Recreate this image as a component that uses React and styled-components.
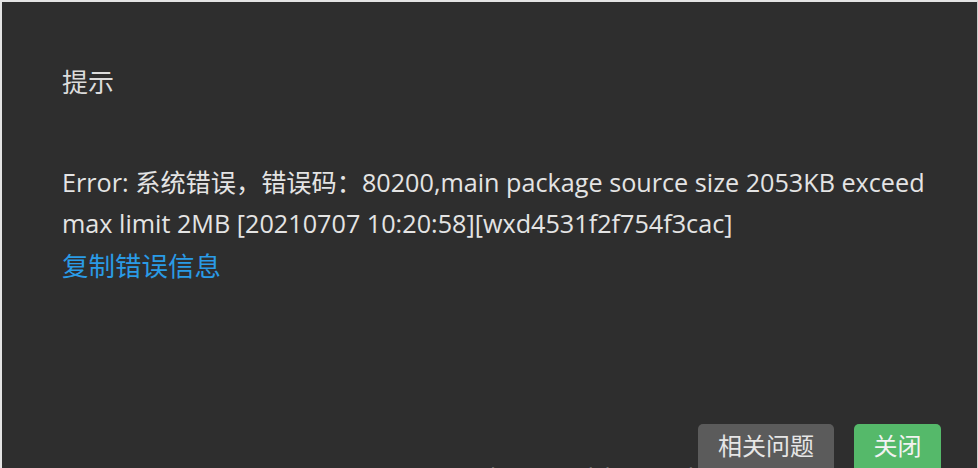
import React from 'react';
import styled, { createGlobalStyle } from 'styled-components';

const GlobalStyle = createGlobalStyle`
  html, body {
    margin: 0;
    padding: 0;
    background: #2e2e2e;
  }
  body {
    font-family: "Open Sans", "Noto Sans CJK SC", sans-serif;
  }
`;

function App() {
  return (
    <>
      <GlobalStyle />
      <Dialog>
        <Title>提示</Title>
        <Message>
          Error: 系统错误，错误码：80200,main package source size 2053KB exceed max limit 2MB [20210707 10:20:58][wxd4531f2f754f3cac]
        </Message>
        <CopyLink>复制错误信息</CopyLink>
        <Footer>
          <Button>相关问题</Button>
          <Button primary>关闭</Button>
        </Footer>
        <Watermark>https://blog.csdn.net/weixin_44389997</Watermark>
      </Dialog>
    </>
  );
}

export default App;

const Dialog = styled.div`
  position: relative;
  box-sizing: border-box;
  height: 100vh;
  overflow: hidden;
  display: flex;
  flex-direction: column;
  padding: 61px 36px 0 62px;
  background: #2e2e2e;
  border-top: 2px solid #e4e4e4;
  border-left: 2px solid #e4e4e4;
  border-right: 1px solid #cfcfcf;
`;

const Title = styled.div`
  font-size: 26px;
  line-height: 39px;
  color: #dcdcdc;
  margin-left: -2px;
`;

const Message = styled.div`
  margin-top: 60px;
  margin-left: -2px;
  font-size: 25.2px;
  line-height: 41px;
  color: #e4e4e4;
  max-width: 876px;
`;

const CopyLink = styled.a`
  margin-left: -2px;
  font-size: 26.5px;
  line-height: 44px;
  color: #2a9be6;
  cursor: pointer;
`;

const Footer = styled.div`
  margin-top: auto;
  height: 44px;
  display: flex;
  justify-content: flex-end;
  gap: 20px;
`;

const Button = styled.button`
  align-self: flex-start;
  height: 52px;
  padding: 0 ${(p) => (p.primary ? '19.5px' : '20px')} 8px;
  border: none;
  border-radius: 5px;
  font-family: "Open Sans", "Noto Sans CJK SC", sans-serif;
  font-size: 24px;
  line-height: 44px;
  color: ${(p) => (p.primary ? '#f2f2f2' : '#e6e6e6')};
  background: ${(p) => (p.primary ? '#55b96a' : '#5b5b5b')};
`;

const Watermark = styled.div`
  position: absolute;
  left: 488px;
  bottom: -24px;
  font-family: "Open Sans", sans-serif;
  font-size: 24px;
  letter-spacing: 2px;
  color: rgba(150, 150, 150, 0.6);
  pointer-events: none;
  white-space: nowrap;
`;
